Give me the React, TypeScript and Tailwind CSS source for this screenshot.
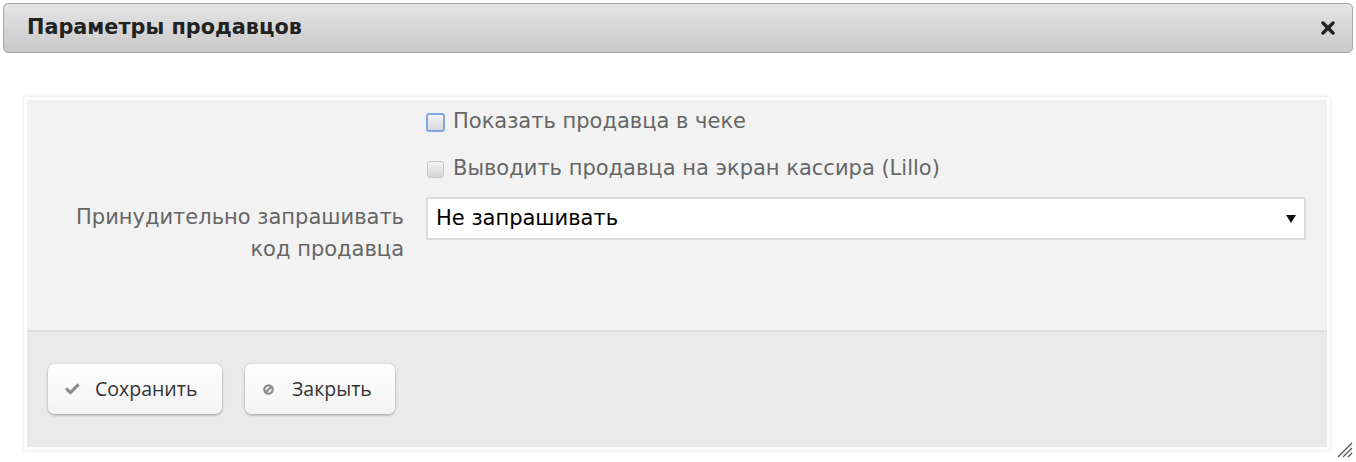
const sans = { fontFamily: '"DejaVu Sans", Verdana, sans-serif' }

export default function App() {
  return (
    <div className="relative w-[1356px] h-[462px] bg-white overflow-hidden" style={sans}>
      {/* Title bar */}
      <div className="mx-[3px] mt-[3px] h-[50px] rounded-[5px] border border-[#a8a8a8] bg-gradient-to-b from-[#e4e4e4] to-[#c9c9c9] flex items-center justify-between pl-[23px] pr-[16px]">
        <span className="text-[20.8px] font-bold text-[#222]">Параметры продавцов</span>
        <svg width="14" height="14" viewBox="0 0 14 14" className="mr-[1px]">
          <path d="M2 2 L12 12 M12 2 L2 12" stroke="#222" strokeWidth="3.4" strokeLinecap="round" />
        </svg>
      </div>

      {/* Panel */}
      <div className="mt-[44px] ml-[24px] w-[1306px] border-[3px] border-white shadow-[0_0_3px_rgba(0,0,0,0.15)]">
        <div className="bg-[#f2f2f2] h-[230px] pt-[8px]">
          <div className="flex flex-col gap-[19px] pl-[399px]">
            <label className="flex items-center gap-[8px] h-[28px]">
              <span className="w-[19px] h-[19px] rounded-[3px] border-2 border-[#7da7e8] bg-gradient-to-b from-[#f4f4f4] to-[#d8d8d8]" />
              <span className="text-[21px] text-[#666]">Показать продавца в чеке</span>
            </label>
            <label className="flex items-center gap-[8px] h-[28px]">
              <span className="w-[17px] h-[17px] ml-[1px] mr-[1px] rounded-[3px] border border-[#c8c8c8] bg-gradient-to-b from-[#f4f4f4] to-[#d6d6d6]" />
              <span className="text-[21px] text-[#666]">Выводить продавца на экран кассира (Lillo)</span>
            </label>
          </div>
          <div className="flex mt-[14px]">
            <div className="w-[377px] text-right text-[21px] leading-[32px] text-[#666] pt-[4px]">
              Принудительно запрашивать
              <br />
              код продавца
            </div>
            <div className="ml-[22px] w-[880px] h-[43px] border-2 border-[#dcdcdc] bg-white flex items-center justify-between pl-[8px] pr-[8px]">
              <span className="text-[21px] text-black">Не запрашивать</span>
              <svg width="10" height="10" viewBox="0 0 10 10">
                <path d="M0 1 L10 1 L5 9 Z" fill="#111" />
              </svg>
            </div>
          </div>
        </div>
        <div className="h-[2px] bg-[#dedede]" />
        <div className="bg-[#eaeaea] h-[115px] flex items-start gap-[23px] pl-[21px] pt-[32px]" style={{ fontFamily: '"Open Sans", sans-serif' }}>
          <button className="w-[174px] h-[50px] rounded-[7px] bg-gradient-to-b from-white to-[#f3f3f3] shadow-[0_1px_3px_rgba(0,0,0,0.35)] flex items-center pl-[17px] gap-[15px] text-[19.5px] text-[#333]">
            <svg width="15" height="12" viewBox="0 0 15 12">
              <path d="M0 6.5 L2.2 4.3 L5.3 7.4 L12.5 0.2 L14.7 2.4 L5.3 11.8 Z" fill="#8a8a8a" />
            </svg>
            Сохранить
          </button>
          <button className="w-[150px] h-[50px] rounded-[7px] bg-gradient-to-b from-white to-[#f3f3f3] shadow-[0_1px_3px_rgba(0,0,0,0.35)] flex items-center pl-[18px] gap-[18px] text-[19.5px] text-[#333]">
            <svg width="11" height="11" viewBox="0 0 11 11">
              <circle cx="5.5" cy="5.5" r="4.2" fill="none" stroke="#8a8a8a" strokeWidth="2.2" />
              <path d="M8.3 2.7 L2.7 8.3" stroke="#8a8a8a" strokeWidth="2.2" />
            </svg>
            Закрыть
          </button>
        </div>
      </div>

      {/* resize handle */}
      <svg width="18" height="18" viewBox="0 0 18 18" className="absolute left-[1336px] top-[441px]">
        <path d="M2 16 L16 2 M7 16 L16 7 M12 16 L16 12" stroke="#555" strokeWidth="1.3" />
      </svg>
    </div>
  )
}
